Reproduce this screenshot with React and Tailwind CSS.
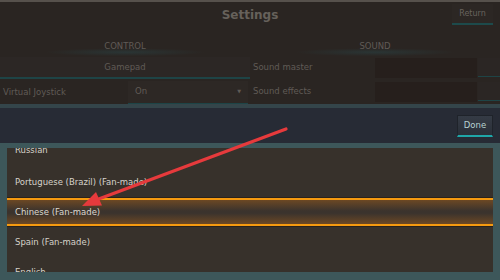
export default function App() {
  const langs = ['Russian', 'Portuguese (Brazil) (Fan-made)', 'Chinese (Fan-made)', 'Spain (Fan-made)', 'English'];

  return (
    <div
      className="relative w-[500px] h-[280px] overflow-hidden bg-[#2a2522] flex flex-col"
      style={{ fontFamily: '"DejaVu Sans", "Liberation Sans", sans-serif' }}
    >
      {/* dimmed settings screen behind */}
      <div className="shrink-0 h-[2px] bg-[#56514c]" />
      <div className="shrink-0 h-[25px] grid grid-cols-[1fr_auto_1fr] items-center">
        <div />
        <div className="text-[12px] font-bold text-[#66615b] mt-[1px]">Settings</div>
        <div className="flex justify-end pr-[7px]">
          <div className="w-[41px] h-[21px] flex items-center justify-center bg-[#2c2724] border-b-[2px] border-[#1d4a4b] text-[8px] text-[#68635e]">
            Return
          </div>
        </div>
      </div>

      <div className="shrink-0 h-[77px] grid grid-cols-2 overflow-hidden">
        {/* control column */}
        <div className="flex flex-col">
          <div className="shrink-0 h-[30px] flex items-end justify-center pb-[4px] bg-[radial-gradient(ellipse_80px_4px_at_50%_84%,rgba(40,110,120,0.22),transparent)]">
            <span className="text-[8.5px] text-[#605b56]">CONTROL</span>
          </div>
          <div className="shrink-0 h-[22px] flex items-center justify-center bg-[#2c2725] border-b-[2px] border-[#1e4446] text-[8.5px] text-[#605b56]">
            Gamepad
          </div>
          <div className="shrink-0 h-[25px] flex items-center mt-[1px]">
            <span className="w-[128px] pl-[3px] text-[8.5px] text-[#605b56]">Virtual Joystick</span>
            <div className="flex-1 h-[24px] flex items-center justify-between px-[7px] bg-[#2d2825] border-b-[2px] border-[#1e4446] text-[8.5px] text-[#605b56] mr-[2px]">
              <span>On</span>
              <span className="text-[5px]">▼</span>
            </div>
          </div>
        </div>

        {/* sound column */}
        <div className="flex flex-col">
          <div className="shrink-0 h-[30px] flex items-end justify-center pb-[4px] bg-[radial-gradient(ellipse_80px_4px_at_50%_84%,rgba(40,110,120,0.22),transparent)]">
            <span className="text-[8.5px] text-[#605b56]">SOUND</span>
          </div>
          <div className="shrink-0 h-[21px] flex items-center">
            <span className="w-[125px] pl-[3px] text-[8.5px] text-[#605b56]">Sound master</span>
            <div className="w-[102px] h-[20px] bg-[#261f1c]" />
            <div className="flex-1 h-[19px] ml-[1px] bg-[#2b2624] border-b-[1px] border-[#1e4446]" />
          </div>
          <div className="shrink-0 h-[21px] flex items-center mt-[3px]">
            <span className="w-[125px] pl-[3px] text-[8.5px] text-[#605b56]">Sound effects</span>
            <div className="w-[102px] h-[20px] bg-[#261f1c]" />
            <div className="flex-1 h-[19px] ml-[1px] bg-[#2b2624] border-b-[1px] border-[#1e4446]" />
          </div>
          <div className="flex-1 flex mt-[2px]">
            <div className="w-[125px]" />
            <div className="w-[102px] bg-[#261f1c]" />
          </div>
        </div>
      </div>

      {/* dialog bar */}
      <div className="shrink-0 h-[4px] bg-[#34454a]" />
      <div className="shrink-0 h-[35px] bg-[#272b35] flex items-center justify-end pr-[7px]">
        <div className="w-[36px] h-[22px] flex items-center justify-center bg-gradient-to-b from-[#353b45] to-[#2a2f38] border border-[#1f232a] border-b-[2px] border-b-[#1fa6a8] text-[8.5px] text-[#b7d2d2]">
          Done
        </div>
      </div>

      {/* language list */}
      <div className="flex-1 min-h-0 bg-[#3d575a] pt-[5px] px-[7px] pb-[8px] flex flex-col">
        <div className="flex-1 min-h-0 bg-[#37312b] overflow-hidden">
          <div className="mt-[-11px] flex flex-col">
            {langs.map((l, i) =>
              l === 'Chinese (Fan-made)' ? (
                <div key={l} className="shrink-0 h-[30px] flex flex-col">
                  <div className="h-[1px] bg-[#2a221b]" />
                  <div className="h-[2px] bg-[#f59a10]" />
                  <div className="flex-1 flex items-center pl-[8px] text-[8.5px] text-[#ddd8cf] bg-[linear-gradient(to_bottom,#6c4824,#3b332d_45%,#3b332d_55%,#6c4824)]">
                    {l}
                  </div>
                  <div className="h-[2px] bg-[#f59a10]" />
                  <div className="h-[1px] bg-[#2a221b]" />
                </div>
              ) : (
                <div
                  key={l}
                  className={`shrink-0 h-[30px] flex items-center pl-[8px] text-[8.5px] text-[#d6d2ca] ${i === 0 ? 'pb-[4px]' : ''}`}
                >
                  {l}
                </div>
              )
            )}
          </div>
        </div>
      </div>

      {/* red annotation arrow */}
      <svg className="absolute left-0 top-0 pointer-events-none" width="500" height="280" viewBox="0 0 500 280">
        <line x1="286" y1="129" x2="96" y2="200" stroke="#e63a3c" strokeWidth="3.2" strokeLinecap="round" />
        <polygon points="82,206 102,205.5 96,192" fill="#e63a3c" />
      </svg>
    </div>
  );
}
